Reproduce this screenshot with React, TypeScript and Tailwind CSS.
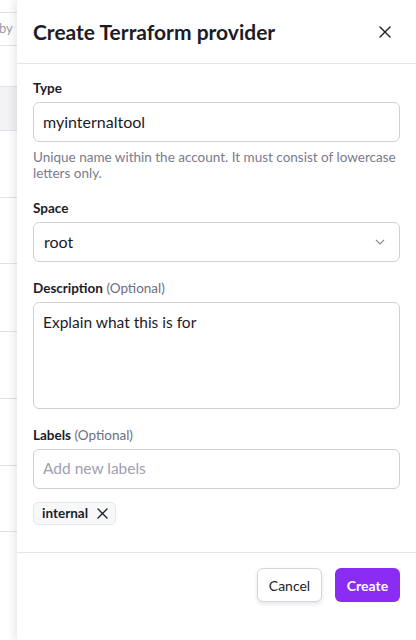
import React from 'react';

const font = { fontFamily: 'Lato, "Noto Sans", sans-serif' };

// rows of the table that peeks out from behind the drawer
const bgRows = [
    { h: 'h-[33px]', cls: '', text: 'by' },
    { h: 'h-[41px]', cls: '', text: '' },
    { h: 'h-[44px]', cls: 'bg-[#f3f3f6]', text: '' },
    { h: 'h-[67px]', cls: '', text: '' },
    { h: 'h-[66px]', cls: '', text: '' },
    { h: 'h-[68px]', cls: '', text: '' },
    { h: 'h-[67px]', cls: '', text: '' },
    { h: 'h-[67px]', cls: '', text: '' },
    { h: 'h-[66px]', cls: '', text: '' },
    { h: 'h-[66px]', cls: '', text: '' },
];

const FieldLabel: React.FC<{ label: string; optional?: boolean }> = ({ label, optional }) => (
    <div className="text-[13.5px] leading-4 mb-[6px]">
        <span className="font-bold text-[#1c1c28]">{label}</span>
        {optional && <span className="text-[#6e6e80]"> (Optional)</span>}
    </div>
);

export default function App() {
    return (
        <div className="flex h-[640px] w-[416px] overflow-hidden bg-white" style={font}>
            <div className="w-[17px] shrink-0 pt-[12px]">
                {bgRows.map((r, i) => (
                    <div
                        key={i}
                        className={`${r.h} ${r.cls} border-t border-[#e2e2e8] flex items-center text-[13px] text-[#9a9aa8] -ml-[1px]`}
                    >
                        {r.text}
                    </div>
                ))}
            </div>

            <div className="flex-1 flex flex-col bg-white shadow-[-3px_0_8px_rgba(30,30,60,0.10)] relative">
                <div className="h-[64px] shrink-0 flex items-center justify-between pl-4 pr-[25px] border-b border-[#e6e6ea]">
                    <h2 className="text-[21px] font-bold text-[#1c1c28]">Create Terraform provider</h2>
                    <svg width="12" height="12" viewBox="0 0 12 12" className="text-[#1c1c28]">
                        <path d="M1 1L11 11M11 1L1 11" stroke="currentColor" strokeWidth="1.4" strokeLinecap="round" />
                    </svg>
                </div>

                <div className="flex-1 px-4 pt-[16px] flex flex-col">
                    <FieldLabel label="Type" />
                    <div className="h-[40px] rounded-[6px] border border-[#cfcfd8] flex items-center px-[9px] text-[16px] text-[#1c1c28]">
                        myinternaltool
                    </div>
                    <p className="text-[13.5px] leading-[16px] text-[#7a7a8c] mt-[7px]">
                        Unique name within the account. It must consist of lowercase letters only.
                    </p>

                    <div className="mt-[19px]">
                        <FieldLabel label="Space" />
                    </div>
                    <div className="h-[40px] rounded-[6px] border border-[#cfcfd8] flex items-center justify-between pl-[10px] pr-[14px] text-[16px] text-[#1c1c28]">
                        <span>root</span>
                        <svg width="10" height="6" viewBox="0 0 10 6" className="text-[#8a8a98]">
                            <path d="M1 1L5 5L9 1" fill="none" stroke="currentColor" strokeWidth="1.2" />
                        </svg>
                    </div>

                    <div className="mt-[18px]">
                        <FieldLabel label="Description" optional />
                    </div>
                    <div className="h-[107px] rounded-[6px] border border-[#cfcfd8] px-[9px] pt-[8px] text-[15.5px] text-[#1c1c28]">
                        Explain what this is for
                    </div>

                    <div className="mt-[18px]">
                        <FieldLabel label="Labels" optional />
                    </div>
                    <div className="h-[40px] rounded-[6px] border border-[#cfcfd8] flex items-center px-[9px] text-[15.5px] text-[#a0a0ae]">
                        Add new labels
                    </div>
                    <div className="mt-[11px]">
                        <span className="inline-flex items-center gap-[9px] h-[23px] pl-[8px] pr-[7px] rounded-[5px] border border-[#e6e6ec] bg-[#f7f8fa] text-[13.5px] font-bold text-[#1c1c28]">
                            internal
                            <svg width="11" height="11" viewBox="0 0 11 11">
                                <path d="M1 1L10 10M10 1L1 10" stroke="#1c1c28" strokeWidth="1.3" strokeLinecap="round" />
                            </svg>
                        </span>
                    </div>
                </div>

                <div className="h-[88px] shrink-0 border-t border-[#e6e6ea] flex justify-end gap-[13px] px-4 pt-[15px]">
                    <button className="h-[34px] w-[65px] rounded-[6px] border border-[#d4d4dc] bg-white text-[14px] text-[#1c1c28] shadow-[0_2px_4px_rgba(30,30,60,0.12)]">
                        Cancel
                    </button>
                    <button className="h-[34px] w-[65px] rounded-[6px] bg-[#8b2cf5] text-[14px] font-bold text-white">
                        Create
                    </button>
                </div>
            </div>
        </div>
    );
}
